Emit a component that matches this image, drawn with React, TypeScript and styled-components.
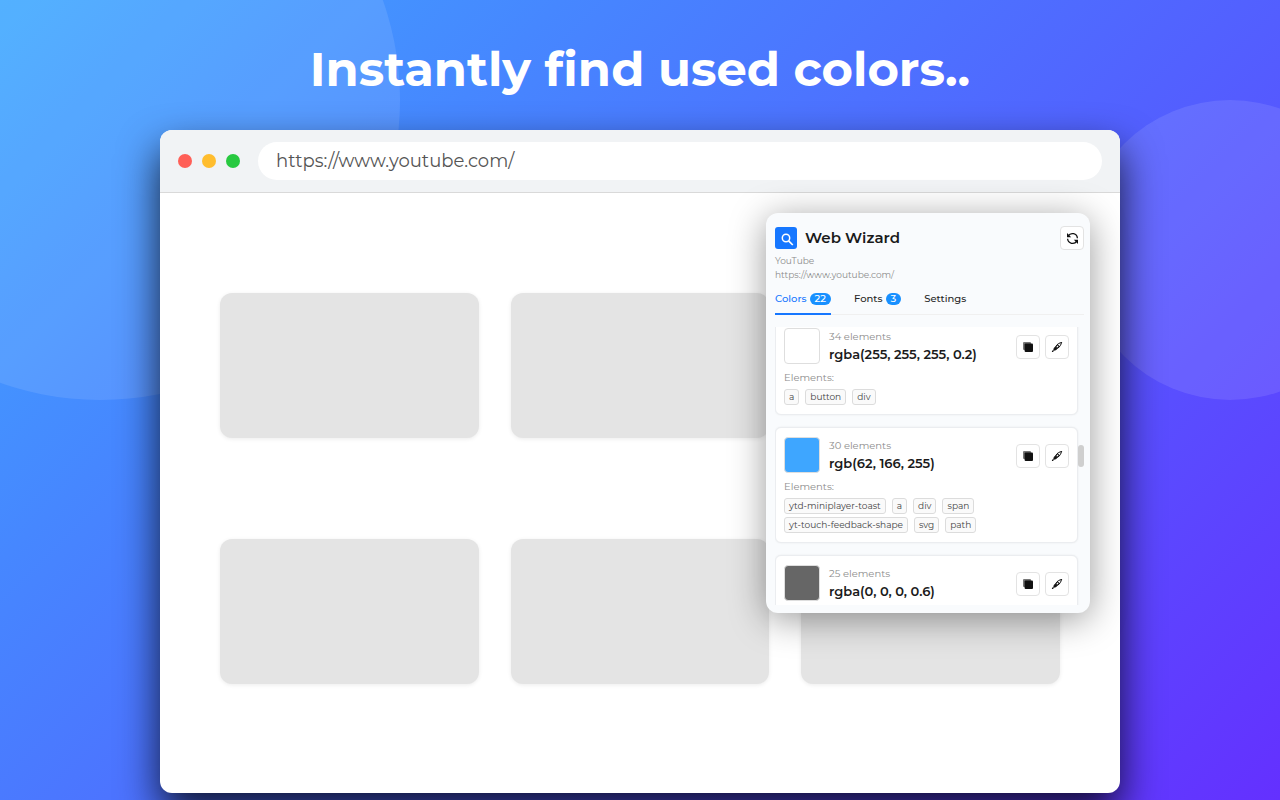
import React, { useLayoutEffect, useRef } from "react";
import styled, { createGlobalStyle } from "styled-components";

const GlobalStyle = createGlobalStyle`
  *, *::before, *::after { box-sizing: border-box; }
  body {
    margin: 0;
    font-family: Montserrat, Inter, "Liberation Sans", sans-serif;
    color: #1a1a1a;
  }
  button, input { font: inherit; color: inherit; }
  h1, h2, p, ul { margin: 0; padding: 0; }
  ul { list-style: none; }
`;

const Page = styled.main`
  position: relative;
  height: 100vh;
  overflow: hidden;
  padding: 0 24px;
  background: linear-gradient(135deg, #40a9ff 0%, #4687ff 27%, #5261ff 60%, #6430ff 100%);
`;

const Circle = styled.div<{ $size: number }>`
  position: absolute;
  width: ${(p) => p.$size}px;
  height: ${(p) => p.$size}px;
  border-radius: 50%;
  background: rgba(255, 255, 255, 0.1);
`;

const LeftCircle = styled(Circle)`
  top: -200px;
  left: -200px;
`;

const RightCircle = styled(Circle)`
  top: 100px;
  right: -100px;
`;

const Headline = styled.h1`
  position: relative;
  padding: 39px 0 31px;
  font-size: 48px;
  line-height: 60px;
  font-weight: 700;
  text-align: center;
  color: #fff;
`;

const BrowserWindow = styled.section`
  position: relative;
  max-width: 960px;
  margin: 0 auto;
  border-radius: 12px;
  background: #fff;
  box-shadow: 0 20px 40px rgba(0, 0, 0, 0.8);
`;

const BrowserBar = styled.header`
  display: flex;
  align-items: center;
  gap: 18px;
  padding: 12px 18px;
  border-bottom: 1px solid #d9d9d9;
  border-radius: 12px 12px 0 0;
  background: #f1f3f5;
`;

const Lights = styled.div`
  display: flex;
  gap: 10px;
`;

const Light = styled.span<{ $color: string }>`
  width: 14px;
  height: 14px;
  border-radius: 50%;
  background: ${(p) => p.$color};
`;

const Address = styled.input`
  flex: 1;
  min-width: 0;
  height: 38px;
  padding: 0 18px;
  border: 0;
  border-radius: 19px;
  background: #fff;
  color: #555;
  font-size: 18px;
  font-weight: 400;
  outline: none;
`;

const Viewport = styled.div`
  position: relative;
`;

const VideoGrid = styled.div`
  display: grid;
  grid-template-columns: repeat(3, 1fr);
  gap: 101px 32px;
  padding: 100px 60px 109px;
`;

const VideoCard = styled.div`
  height: 145px;
  border-radius: 12px;
  background: #e4e4e4;
  box-shadow: 0 1px 4px rgba(0, 0, 0, 0.08);
`;

const Popup = styled.aside`
  position: absolute;
  top: 20px;
  right: 30px;
  display: flex;
  flex-direction: column;
  width: 324px;
  height: 400px;
  padding: 13px 6px 8px 9px;
  border-radius: 12px;
  background: #f9fbfd;
  box-shadow: 0 6px 36px rgba(0, 0, 0, 0.4);
`;

const PopupHeader = styled.div`
  display: flex;
  align-items: center;
  gap: 8px;
`;

const Logo = styled.svg`
  width: 22px;
  height: 22px;
`;

const Title = styled.h2`
  flex: 1;
  font-size: 15px;
  line-height: 20px;
  font-weight: 600;
  color: #1a1a1a;
`;

const IconButton = styled.button`
  display: grid;
  place-items: center;
  width: 24px;
  height: 24px;
  padding: 0;
  border: 1px solid #e3e3e3;
  border-radius: 4px;
  background: #fff;
  color: #111;
  cursor: pointer;
`;

const SiteInfo = styled.div`
  padding-top: 4px;
  font-size: 9px;
  line-height: 14px;
  color: #8c8c8c;
`;

const Tabs = styled.div`
  display: flex;
  gap: 23px;
  margin-top: 6px;
  border-bottom: 1px solid #f0f0f0;
`;

const Tab = styled.button<{ $active?: boolean }>`
  display: flex;
  align-items: center;
  gap: 3px;
  height: 27px;
  margin-bottom: -1px;
  padding: 0 0 4px;
  border: 0;
  border-bottom: 2px solid ${(p) => (p.$active ? "#1677ff" : "transparent")};
  background: none;
  color: ${(p) => (p.$active ? "#1677ff" : "#262626")};
  font-size: 10px;
  line-height: 14px;
  font-weight: 500;
  cursor: pointer;
`;

const Count = styled.span`
  padding: 0 5px;
  border-radius: 6px;
  background: #1890ff;
  color: #fff;
  line-height: 12px;
`;

const ListFrame = styled.div`
  position: relative;
  flex: 1;
  min-height: 0;
  margin-top: 12px;
`;

const ColorList = styled.ul`
  display: flex;
  flex-direction: column;
  gap: 12px;
  height: 100%;
  padding-right: 6px;
  overflow-y: auto;
  scrollbar-width: none;
`;

const ScrollThumb = styled.span`
  position: absolute;
  top: 118px;
  right: 0;
  width: 6px;
  height: 22px;
  border-radius: 3px;
  background: #cfcfcf;
`;

const ColorCard = styled.li`
  flex: none;
  padding: 9px 8px;
  border: 1px solid #ebedf0;
  border-radius: 6px;
  background: #fff;
  box-shadow: 0 0 2px rgba(0, 0, 0, 0.08);
`;

const ColorRow = styled.div`
  display: flex;
  align-items: center;
`;

const Swatch = styled.span<{ $color: string }>`
  width: 36px;
  height: 36px;
  border: 1px solid #dedede;
  border-radius: 4px;
  background: ${(p) => p.$color};
`;

const ColorText = styled.div`
  flex: 1;
  padding: 0 0 1px 9px;
`;

const Actions = styled.div`
  display: flex;
  gap: 5px;
  padding-top: 2px;
`;

const Muted = styled.p`
  font-size: 10px;
  line-height: 16px;
  color: #8c8c8c;
`;

const ColorValue = styled.p`
  font-size: 13px;
  line-height: 18px;
  font-weight: 600;
`;

const ElementsLabel = styled(Muted)`
  padding: 6px 0 3px;
`;

const Chips = styled.div`
  display: flex;
  flex-wrap: wrap;
  gap: 3px 6px;
`;

const Chip = styled.span`
  padding: 0 4px;
  border: 1px solid #dcdcdc;
  border-radius: 3px;
  background: #fafafa;
  color: #444;
  font-size: 9px;
  line-height: 14px;
`;

const CopyIcon = () => (
  <svg width="12" height="12" viewBox="0 0 12 12" aria-hidden="true">
    <rect x="1" y="1" width="8" height="8" rx="1" fill="#777" />
    <rect x="2.600" y="2.600" width="8.400" height="8.400" rx="1" fill="#111" />
  </svg>
);

const PenIcon = () => (
  <svg width="12" height="12" viewBox="0 0 12 12" fill="none" stroke="#111" strokeWidth="1" strokeLinecap="round" strokeLinejoin="round" aria-hidden="true">
    <path d="M10.400 1.600C8.400 1.700 6 3.200 4.900 5.300l1.800 1.800c2.100-1.100 3.600-3.500 3.700-5.500Z" />
    <path d="M6.500 3.900 8.100 5.500" strokeWidth="1.200" />
    <path d="M4.700 5.800 3.300 6.900l-.5 2.300 2.300-.5 1.200-1.400Z" fill="#111" />
    <path d="M1.500 10.400l.7-.6" strokeWidth="1.300" />
  </svg>
);

const RefreshIcon = () => (
  <svg width="13" height="13" viewBox="0 0 13 13" fill="none" stroke="#111" strokeWidth="1.300" aria-hidden="true">
    <path d="M2.200 3.900A5 5 0 0 1 11.400 6.200" />
    <path d="M10.800 9.100A5 5 0 0 1 1.600 6.800" />
    <path d="M1 1v4.200h4.200Z" fill="#111" stroke="none" />
    <path d="M12 12V7.800H7.800Z" fill="#111" stroke="none" />
  </svg>
);

const LogoIcon = () => (
  <Logo viewBox="0 0 22 22" aria-hidden="true">
    <rect width="22" height="22" rx="3" fill="#1677ff" />
    <circle cx="11" cy="11" r="3.700" fill="none" stroke="#fff" strokeWidth="1.500" />
    <path d="m13.600 13.800 4.200 4.200" stroke="#fff" strokeWidth="1.700" />
  </Logo>
);

type UsedColor = { value: string; fill: string; count: number; elements?: string[] };

const colors: UsedColor[] = [
  { value: "rgba(255, 255, 255, 0.2)", fill: "#ffffff", count: 34, elements: ["a", "button", "div"] },
  {
    value: "rgb(62, 166, 255)",
    fill: "#3ea6ff",
    count: 30,
    elements: ["ytd-miniplayer-toast", "a", "div", "span", "yt-touch-feedback-shape", "svg", "path"],
  },
  { value: "rgba(0, 0, 0, 0.6)", fill: "#666666", count: 25 },
];

export default function App() {
  const list = useRef<HTMLUListElement>(null);

  useLayoutEffect(() => {
    if (list.current) list.current.scrollTop = 9;
  }, []);

  return (
    <>
      <GlobalStyle />
      <Page>
        <LeftCircle $size={600} />
        <RightCircle $size={300} />
        <Headline>Instantly find used colors..</Headline>
        <BrowserWindow>
          <BrowserBar>
            <Lights>
              <Light $color="#ff5f57" />
              <Light $color="#ffbd2e" />
              <Light $color="#28c940" />
            </Lights>
            <Address type="text" aria-label="Address" defaultValue="https://www.youtube.com/" />
          </BrowserBar>
          <Viewport>
            <VideoGrid>
              {[1, 2, 3, 4, 5, 6].map((n) => (
                <VideoCard key={n} />
              ))}
            </VideoGrid>
            <Popup>
              <PopupHeader>
                <LogoIcon />
                <Title>Web Wizard</Title>
                <IconButton aria-label="Refresh">
                  <RefreshIcon />
                </IconButton>
              </PopupHeader>
              <SiteInfo>
                <p>YouTube</p>
                <p>https://www.youtube.com/</p>
              </SiteInfo>
              <Tabs role="tablist">
                <Tab role="tab" aria-selected="true" $active>
                  Colors <Count>22</Count>
                </Tab>
                <Tab role="tab" aria-selected="false">
                  Fonts <Count>3</Count>
                </Tab>
                <Tab role="tab" aria-selected="false">
                  Settings
                </Tab>
              </Tabs>
              <ListFrame>
                <ColorList ref={list}>
                  {colors.map((c) => (
                    <ColorCard key={c.value}>
                      <ColorRow>
                        <Swatch $color={c.fill} />
                        <ColorText>
                          <Muted>{c.count} elements</Muted>
                          <ColorValue>{c.value}</ColorValue>
                        </ColorText>
                        <Actions>
                          <IconButton aria-label="Copy color">
                            <CopyIcon />
                          </IconButton>
                          <IconButton aria-label="Highlight color">
                            <PenIcon />
                          </IconButton>
                        </Actions>
                      </ColorRow>
                      {c.elements && (
                        <>
                          <ElementsLabel>Elements:</ElementsLabel>
                          <Chips>
                            {c.elements.map((e) => (
                              <Chip key={e}>{e}</Chip>
                            ))}
                          </Chips>
                        </>
                      )}
                    </ColorCard>
                  ))}
                </ColorList>
                <ScrollThumb />
              </ListFrame>
            </Popup>
          </Viewport>
        </BrowserWindow>
      </Page>
    </>
  );
}
